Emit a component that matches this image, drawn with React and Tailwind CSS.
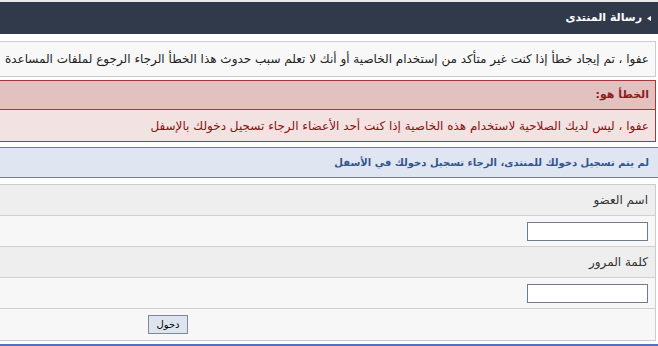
import React from 'react';

const arabic = { fontFamily: '"DejaVu Sans", Tahoma, sans-serif' };

function Row({ bg, children, border = true, className = '' }) {
  return (
    <div
      className={`h-[31px] flex items-center pr-[7px] ${bg} ${border ? 'border-b border-[#cfcfcf]' : ''} ${className}`}
    >
      {children}
    </div>
  );
}

export default function App() {
  return (
    <div dir="rtl" className="w-[658px] h-[346px] overflow-hidden bg-white text-[12px]" style={arabic}>
      {/* شريط العنوان */}
      <div className="h-[2px] bg-[#e9e9e9]" />
      <div className="h-[32px] bg-[#303a4a] flex items-center pr-[7px] gap-[5px] text-white font-bold text-[11px]">
        <svg width="4" height="5" viewBox="0 0 4 5" className="mt-[1px]">
          <path d="M4 0 L0 2.5 L4 5 Z" fill="#ffffff" />
        </svg>
        <span>رسالة المنتدى</span>
      </div>

      {/* رسالة عامة */}
      <div className="mt-[7px] mr-[2px] h-[36px] border border-l-0 border-[#cccccc] bg-[#f8f8f8] flex items-center pr-[6px] whitespace-nowrap overflow-hidden text-[#222]">
        عفوا ، تم إيجاد خطأ إذا كنت غير متأكد من إستخدام الخاصية أو أنك لا تعلم سبب حدوث هذا الخطأ الرجاء الرجوع لملفات المساعدة
      </div>

      {/* صندوق الخطأ */}
      <div className="mt-[3px] mr-[2px] border border-l-0 border-[#a33a3a] overflow-hidden whitespace-nowrap">
        <div className="h-[29px] bg-[#e4c1c1] border-b border-[#a33a3a] flex items-center pr-[6px] font-bold text-[11px] text-[#8e1c1c]">
          الخطأ هو:
        </div>
        <div className="h-[31px] bg-[#f3e2e2] flex items-center pr-[6px] text-[#8e1010]">
          عفوا ، ليس لديك الصلاحية لاستخدام هذه الخاصية إذا كنت أحد الأعضاء الرجاء تسجيل دخولك بالإسفل
        </div>
      </div>

      {/* تنبيه الدخول */}
      <div className="mt-[5px] h-[31px] bg-[#dfe6f2] border-y border-[#5a7dbb] flex items-center pr-[9px] font-bold text-[10px] text-[#34558f] whitespace-nowrap overflow-hidden">
        لم يتم تسجيل دخولك للمنتدى، الرجاء تسجيل دخولك في الأسفل
      </div>

      {/* نموذج الدخول */}
      <div className="mt-[6px] mr-[2px] border border-l-0 border-[#cccccc] text-[#333]">
        <Row bg="bg-[#eeeeee]">اسم العضو</Row>
        <Row bg="bg-[#f7f7f7]">
          <input type="text" className="w-[121px] h-[19px] bg-white border border-[#6f7c8c] outline-none" />
        </Row>
        <Row bg="bg-[#eeeeee]">كلمة المرور</Row>
        <Row bg="bg-[#f7f7f7]">
          <input type="password" className="w-[121px] h-[19px] bg-white border border-[#6f7c8c] outline-none" />
        </Row>
        <Row bg="bg-[#f7f7f7]" border={false} className="pr-[467px]">
          <button className="w-[40px] h-[19px] bg-[#dde4ee] border border-[#7d8a9c] text-[10px] text-black leading-none">
            دخول
          </button>
        </Row>
      </div>

      <div className="mt-[3px] h-[4px] border-t-[3px] border-[#4f74b8]" />
    </div>
  );
}
